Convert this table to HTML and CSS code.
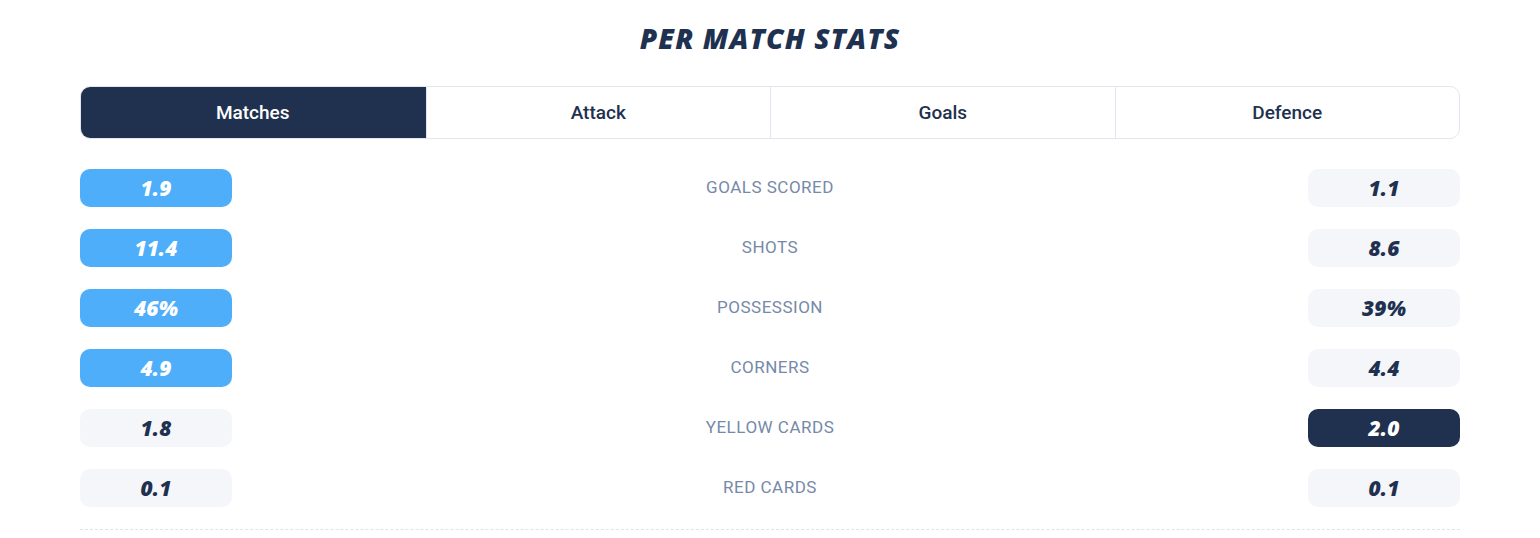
FILE: index.html
```html
<!DOCTYPE html>
<html>
<head>
<meta charset="utf-8">
<link rel="stylesheet" href="styles.css">
</head>
<body>
<div class="wrap">
  <h2 class="title">PER MATCH STATS</h2>
  <div class="tabs">
    <div class="tab active">Matches</div>
    <div class="tab">Attack</div>
    <div class="tab">Goals</div>
    <div class="tab">Defence</div>
  </div>
  <div class="rows">
    <div class="row"><div class="pill blue">1.9</div><div class="label">GOALS SCORED</div><div class="pill grey">1.1</div></div>
    <div class="row"><div class="pill blue">11.4</div><div class="label">SHOTS</div><div class="pill grey">8.6</div></div>
    <div class="row"><div class="pill blue">46%</div><div class="label">POSSESSION</div><div class="pill grey">39%</div></div>
    <div class="row"><div class="pill blue">4.9</div><div class="label">CORNERS</div><div class="pill grey">4.4</div></div>
    <div class="row"><div class="pill grey">1.8</div><div class="label">YELLOW CARDS</div><div class="pill dark">2.0</div></div>
    <div class="row"><div class="pill grey">0.1</div><div class="label">RED CARDS</div><div class="pill grey">0.1</div></div>
  </div>
  <div class="divider"></div>
</div>
</body>
</html>
```
FILE: styles.css
```css
* { box-sizing: border-box; }
html, body { margin: 0; padding: 0; background: #fff; }
body { font-family: Roboto, "Liberation Sans", sans-serif; }
.wrap { padding: 0 80px; }
.title {
  margin: 0;
  height: 86px;
  padding-top: 19px;
  text-align: center;
  font-family: "Open Sans", sans-serif;
  font-weight: 800;
  font-style: italic;
  font-size: 28px;
  letter-spacing: 1.1px;
  line-height: 38px;
  color: #1f3150;
}
.tabs {
  display: grid;
  grid-template-columns: repeat(4, 1fr);
  height: 53px;
  border: 1px solid #e2e6ee;
  border-radius: 10px;
  overflow: hidden;
}
.tab {
  display: flex;
  align-items: center;
  justify-content: center;
  font-size: 19px;
  font-weight: 500;
  color: #1f3150;
  border-left: 1px solid #e2e6ee;
}
.tab:first-child { border-left: none; }
.tab.active { background: #20314f; color: #fff; margin: -1px 0 -1px -1px; }
.rows {
  display: flex;
  flex-direction: column;
  gap: 22px;
  padding-top: 30px;
}
.row {
  display: flex;
  align-items: center;
  justify-content: space-between;
  height: 38px;
}
.pill {
  width: 152px;
  height: 38px;
  border-radius: 10px;
  display: flex;
  align-items: center;
  justify-content: center;
  padding-bottom: 1px;
  font-family: "Open Sans", sans-serif;
  font-weight: 800;
  font-style: italic;
  font-size: 21px;
}
.pill.blue { background: #4faefa; color: #fff; }
.pill.grey { background: #f4f6f9; color: #1f3150; }
.pill.dark { background: #20314f; color: #fff; }
.label {
  font-size: 17px;
  letter-spacing: 0.5px;
  color: #7689a8;
  text-align: center;
  padding-bottom: 2px;
}
.divider {
  margin-top: 22px;
  border-top: 1px dashed #e0e3e8;
}
```
